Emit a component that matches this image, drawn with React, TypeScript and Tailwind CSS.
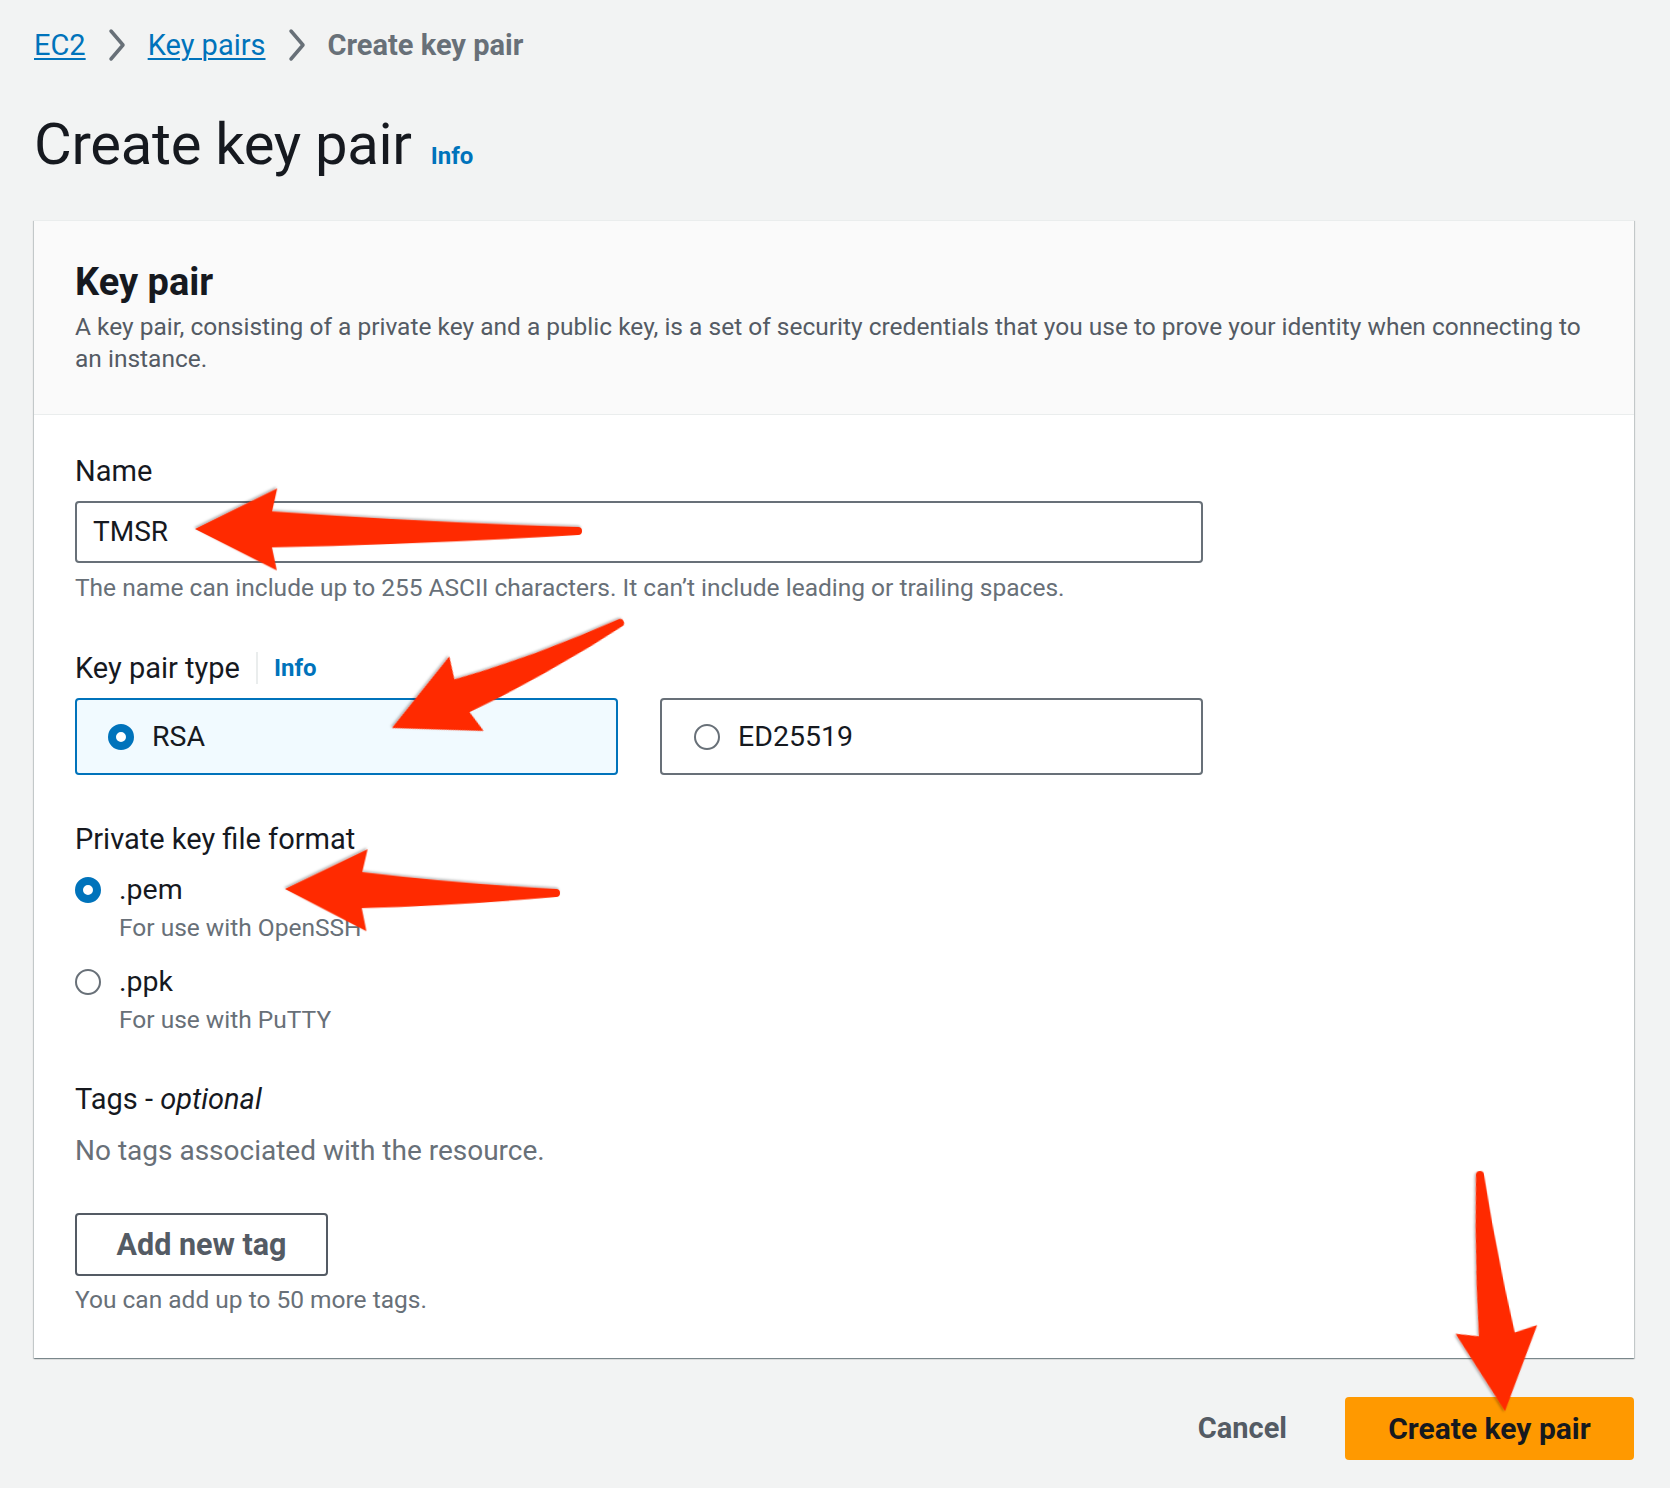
import type { ReactNode } from 'react'

// Red annotation arrows (Skitch style), in page coordinates
interface ArrowSpec {
  x1: number
  y1: number
  x2: number
  y2: number
  bend?: number
}

const arrows: ArrowSpec[] = [
  { x1: 578, y1: 531, x2: 195, y2: 529, bend: -3 },
  { x1: 620, y1: 623, x2: 392, y2: 728, bend: -6 },
  { x1: 556, y1: 893, x2: 285, y2: 889, bend: -3 },
  { x1: 1480, y1: 1175, x2: 1505, y2: 1411, bend: 3 },
]

const arrowPath = (len: number, bend = 0) => {
  const hl = 82
  const hw = 41
  const sw = 18
  const tw = 4
  const nx = len - hl + 5
  const cx = nx / 2
  return [
    `M ${len} 0`,
    `L ${len - hl} ${-hw}`,
    `L ${nx} ${-sw}`,
    `Q ${cx} ${-(sw + tw) / 2 + bend} 0 ${-tw}`,
    `A ${tw} ${tw} 0 0 0 0 ${tw}`,
    `Q ${cx} ${(sw + tw) / 2 + bend} ${nx} ${sw}`,
    `L ${len - hl} ${hw}`,
    'Z',
  ].join(' ')
}

const Arrows = () => (
  <svg
    className="pointer-events-none absolute left-0 top-0"
    width={1670}
    height={1488}
    viewBox="0 0 1670 1488"
  >
    <defs>
      <filter id="arrowShadow" x="-20%" y="-20%" width="140%" height="140%">
        <feDropShadow dx="1" dy="1.5" stdDeviation="1.2" floodColor="#000" floodOpacity="0.3" />
      </filter>
    </defs>
    {arrows.map((a, i) => {
      const dx = a.x2 - a.x1
      const dy = a.y2 - a.y1
      const len = Math.sqrt(dx * dx + dy * dy)
      const angle = (Math.atan2(dy, dx) * 180) / Math.PI
      return (
        <path
          key={i}
          d={arrowPath(len, a.bend)}
          fill="#ff2a00"
          filter="url(#arrowShadow)"
          transform={`translate(${a.x1} ${a.y1}) rotate(${angle})`}
        />
      )
    })}
  </svg>
)

const Chevron = () => (
  <svg width="20" height="34" viewBox="0 0 20 34" className="mx-[21px] shrink-0">
    <path d="M4 3 L16 17 L4 31" fill="none" stroke="#687078" strokeWidth="3.5" strokeLinecap="round" strokeLinejoin="round" />
  </svg>
)

const Breadcrumbs = () => (
  <nav className="flex h-[32px] items-center text-[29px] leading-[32px]">
    <a className="text-[#0073bb] underline underline-offset-[3px] decoration-[2px]">EC2</a>
    <Chevron />
    <a className="text-[#0073bb] underline underline-offset-[3px] decoration-[2px]">Key pairs</a>
    <Chevron />
    <span className="font-bold text-[#687078]">Create key pair</span>
  </nav>
)

const Label = ({ children }: { children: ReactNode }) => (
  <div className="text-[29px] leading-[40px] text-[#16191f]">{children}</div>
)

const Radio = ({ checked }: { checked: boolean }) =>
  checked ? (
    <span className="block h-[26px] w-[26px] shrink-0 rounded-full border-[8px] border-[#0073bb] bg-white" />
  ) : (
    <span className="block h-[26px] w-[26px] shrink-0 rounded-full border-2 border-[#687078] bg-white" />
  )

interface TileProps {
  label: string
  checked: boolean
}

const Tile = ({ label, checked }: TileProps) => (
  <div
    className={
      checked
        ? 'flex h-[77px] items-center gap-[18px] rounded-[4px] border-2 border-[#0073bb] bg-[#f1faff] pl-[31px]'
        : 'flex h-[77px] items-center gap-[18px] rounded-[4px] border-2 border-[#687078] bg-white pl-[32px]'
    }
  >
    <Radio checked={checked} />
    <span className="text-[28.5px] leading-[40px]">{label}</span>
  </div>
)

const formats = [
  { name: '.pem', hint: 'For use with OpenSSH', checked: true },
  { name: '.ppk', hint: 'For use with PuTTY', checked: false },
]

export default function App() {
  return (
    <div className="relative min-h-[1488px] w-full bg-[#f2f3f3] font-['Roboto','Noto_Sans',sans-serif] text-[#16191f]">
      <div className="pl-[34px] pr-[36px] pt-[29px]">
        <Breadcrumbs />

        <div className="mt-[53px] flex items-baseline gap-[19px]">
          <h1 className="text-[58px] font-normal leading-[60px] tracking-[-0.3px]">Create key pair</h1>
          <a className="text-[24px] font-bold text-[#0073bb]">Info</a>
        </div>

        {/* Key pair container */}
        <section className="mt-[46px] border-t border-[#eaeded] bg-white shadow-[0_1px_1px_0_rgba(0,28,36,0.3),1px_1px_1px_0_rgba(0,28,36,0.15),-1px_1px_1px_0_rgba(0,28,36,0.15)]">
          <header className="border-b border-[#eaeded] bg-[#fafafa] px-[41px] pb-[39px] pt-[39px]">
            <h2 className="text-[38px] font-bold leading-[44px]">Key pair</h2>
            <p className="mt-[7px] text-[24.5px] leading-[32px] text-[#545b64]">
              A key pair, consisting of a private key and a public key, is a set of security credentials that you use to prove your identity when connecting to
              <br />
              an instance.
            </p>
          </header>

          <div className="px-[41px] pb-[42px] pt-[36px]">
            <div className="w-[1128px]">
              <Label>Name</Label>
              <div className="mt-[10px] flex h-[62px] items-center rounded-[4px] border-2 border-[#687078] bg-white pl-[16px] text-[28px]">
                TMSR
              </div>
              <p className="mt-[9px] whitespace-nowrap text-[24.5px] leading-[32px] text-[#687078]">
                The name can include up to 255 ASCII characters. It can’t include leading or trailing spaces.
              </p>

              <div className="mt-[44px] flex items-center">
                <Label>Key pair type</Label>
                <span className="ml-[16px] h-[32px] w-[2px] bg-[#eaeded]" />
                <a className="ml-[16px] text-[24px] font-bold leading-[40px] text-[#0073bb]">Info</a>
              </div>
              <div className="mt-[10px] grid grid-cols-2 gap-[42px]">
                <Tile label="RSA" checked />
                <Tile label="ED25519" checked={false} />
              </div>

              <div className="mt-[44px]">
                <Label>Private key file format</Label>
              </div>
              <div className="mt-[11px] flex flex-col gap-[18px]">
                {formats.map((f) => (
                  <div key={f.name} className="flex gap-[18px]">
                    <div className="mt-[7px]">
                      <Radio checked={f.checked} />
                    </div>
                    <div>
                      <div className="text-[28.5px] leading-[40px]">{f.name}</div>
                      <div className="mt-[2px] text-[24.5px] leading-[32px] text-[#687078]">{f.hint}</div>
                    </div>
                  </div>
                ))}
              </div>

              <div className="mt-[43px]">
                <Label>
                  Tags - <i>optional</i>
                </Label>
              </div>
              <p className="mt-[12px] text-[28px] leading-[40px] text-[#687078]">No tags associated with the resource.</p>
              <button className="mt-[42px] h-[63px] w-[253px] rounded-[4px] border-2 border-[#545b64] bg-white text-[30.5px] font-bold text-[#545b64]">
                Add new tag
              </button>
              <p className="mt-[8px] text-[24.5px] leading-[32px] text-[#687078]">You can add up to 50 more tags.</p>
            </div>
          </div>
        </section>

        <div className="mt-[39px] flex items-center justify-end gap-[58px]">
          <button className="text-[29px] font-bold text-[#545b64]">Cancel</button>
          <button className="h-[63px] w-[289px] rounded-[4px] bg-[#ff9900] text-[30px] font-bold text-[#16191f]">
            Create key pair
          </button>
        </div>
      </div>

      <Arrows />
    </div>
  )
}
